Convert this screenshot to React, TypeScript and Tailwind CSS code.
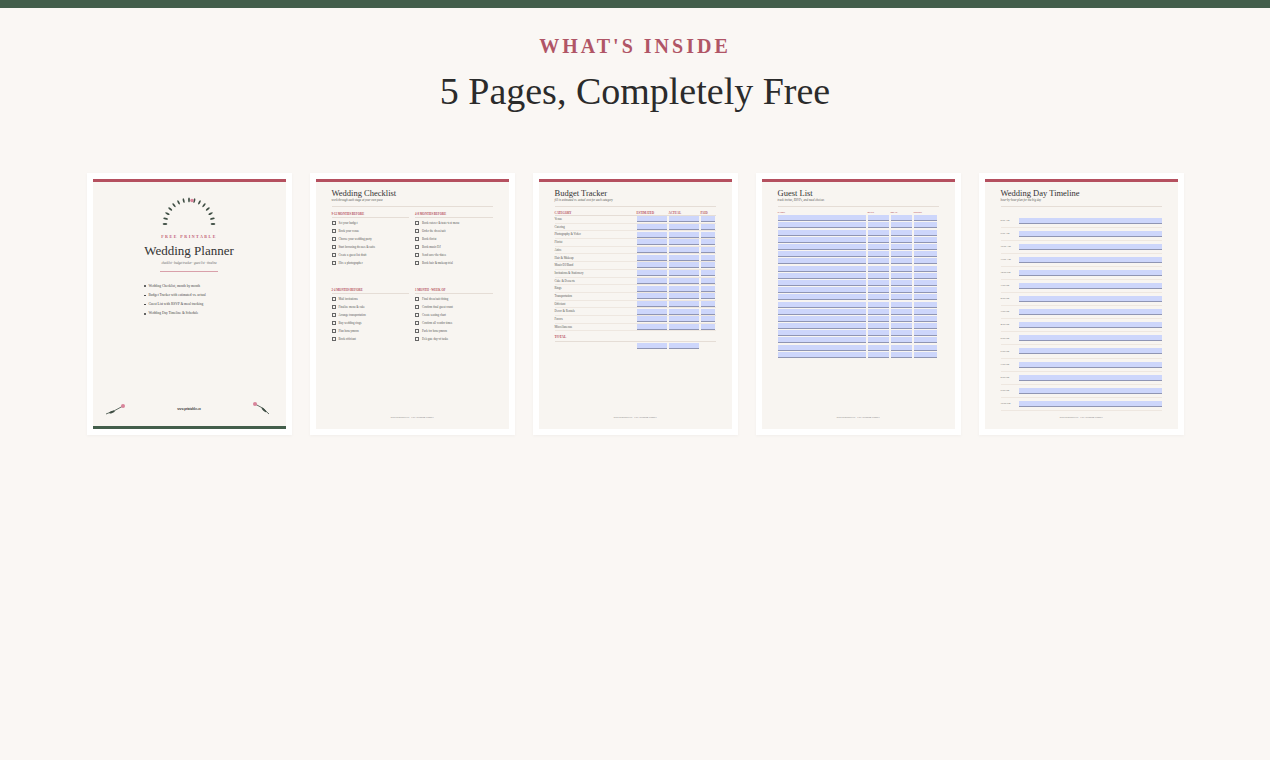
const serif = { fontFamily: '"Liberation Serif", "DejaVu Serif", serif' };

const Field = ({ className = "" }: { className?: string }) => (
  <div className={`h-[6px] border-b border-[#8f95b3] bg-[#cdd6fb] ${className}`} />
);

const Page = ({ children, bottom }: { children: React.ReactNode; bottom?: boolean }) => (
  <div className="bg-white p-[6px] shadow-[0_1px_3px_rgba(0,0,0,0.04)]">
    <div className="relative flex h-[250px] w-[193px] flex-col bg-[#f8f5f1]">
      <div className="h-[3px] bg-[#b5505f]" />
      {children}
      {bottom && <div className="mt-auto h-[3px] bg-[#435e4b]" />}
    </div>
  </div>
);

const Header = ({ title, sub }: { title: string; sub: string }) => (
  <div className="mx-4 mt-[6px] border-b border-[#e5ddd6] pb-[3px]">
    <div className="text-[8.5px] leading-[10px] text-[#333]" style={serif}>{title}</div>
    <div className="text-[3px] italic text-[#555]" style={serif}>{sub}</div>
  </div>
);

const Footer = () => (
  <div className="absolute bottom-[9px] left-0 right-0 text-center text-[2.5px] text-[#777]" style={serif}>
    www.printables.co · Free Wedding Planner
  </div>
);

const Cover = () => (
  <Page bottom>
    <div className="flex flex-col items-center" style={serif}>
      <svg width="56" height="34" viewBox="0 0 56 34" className="mt-[14px]">
        {Array.from({ length: 15 }).map((_, i) => {
          const a = Math.PI * (1 - i / 14);
          const x = 28 + 24 * Math.cos(a);
          const y = 28 - 24 * Math.sin(a);
          const deg = (-a * 180) / Math.PI + 90;
          return <ellipse key={i} cx={x} cy={y} rx="0.9" ry="2.4" fill="#3e4d43" transform={`rotate(${deg} ${x} ${y})`} />;
        })}
        <circle cx="31" cy="4.5" r="1.8" fill="#d9849a" />
      </svg>
      <div className="mt-[4px] text-[4px] font-bold tracking-[1.5px] text-[#c25a73]">FREE PRINTABLE</div>
      <div className="mt-[3px] text-[13px] leading-[16px] text-[#333]">Wedding Planner</div>
      <div className="mt-[2px] text-[3px] italic text-[#666]">checklist · budget tracker · guest list · timeline</div>
      <div className="mt-[5px] h-px w-[58px] bg-[#d9a0aa]" />
      <ul className="mt-[12px] flex w-[130px] flex-col gap-[4px] pl-[20px] text-[3.5px] text-[#444]">
        {["Wedding Checklist, month by month", "Budget Tracker with estimated vs. actual", "Guest List with RSVP & meal tracking", "Wedding Day Timeline & Schedule"].map((t) => (
          <li key={t} className="flex items-center gap-[3px]"><span className="h-[1.5px] w-[1.5px] rounded-full bg-[#333]" />{t}</li>
        ))}
      </ul>
    </div>
    <div className="absolute bottom-[14px] left-[12px] right-[12px] flex items-end justify-between">
      <svg width="22" height="12" viewBox="0 0 22 12"><path d="M1 11 Q10 8 18 3" stroke="#3e4d43" strokeWidth="0.8" fill="none" /><ellipse cx="7" cy="9" rx="3" ry="1" fill="#3e4d43" transform="rotate(-20 7 9)" /><circle cx="18" cy="3" r="2" fill="#d9849a" /></svg>
      <div className="mb-[4px] text-[3px] font-bold text-[#333]" style={serif}>www.printables.co</div>
      <svg width="22" height="14" viewBox="0 0 22 14"><path d="M4 3 Q12 6 18 13" stroke="#3e4d43" strokeWidth="0.8" fill="none" /><ellipse cx="13" cy="9" rx="3" ry="1" fill="#3e4d43" transform="rotate(40 13 9)" /><circle cx="4" cy="3" r="2" fill="#d9849a" /></svg>
    </div>
  </Page>
);

const Section = ({ title, items }: { title: string; items: string[] }) => (
  <div className="flex flex-col" style={serif}>
    <div className="border-b border-[#e5ddd6] pb-[1px] text-[3px] font-bold text-[#b5505f]">{title}</div>
    <div className="mt-[3px] flex flex-col gap-[3.5px]">
      {items.map((t) => (
        <div key={t} className="flex items-center gap-[3px] text-[3px] text-[#555]">
          <span className="h-[4px] w-[4px] border-[0.5px] border-[#666]" />{t}
        </div>
      ))}
    </div>
  </div>
);

const Checklist = () => (
  <Page>
    <Header title="Wedding Checklist" sub="work through each stage at your own pace" />
    <div className="mx-4 mt-[5px] grid grid-cols-2 gap-x-[6px] gap-y-[22px]">
      <Section title="9-12 MONTHS BEFORE" items={["Set your budget", "Book your venue", "Choose your wedding party", "Start browsing dresses & suits", "Create a guest list draft", "Hire a photographer"]} />
      <Section title="4-8 MONTHS BEFORE" items={["Book caterer & taste-test menu", "Order the dress/suit", "Book florist", "Book music/DJ", "Send save-the-dates", "Book hair & makeup trial"]} />
      <Section title="2-4 MONTHS BEFORE" items={["Mail invitations", "Finalize menu & cake", "Arrange transportation", "Buy wedding rings", "Plan honeymoon", "Book officiant"]} />
      <Section title="1 MONTH - WEEK OF" items={["Final dress/suit fitting", "Confirm final guest count", "Create seating chart", "Confirm all vendor times", "Pack for honeymoon", "Delegate day-of tasks"]} />
    </div>
    <Footer />
  </Page>
);

const Budget = () => {
  const cats = ["Venue", "Catering", "Photography & Video", "Florist", "Attire", "Hair & Makeup", "Music/DJ/Band", "Invitations & Stationery", "Cake & Desserts", "Rings", "Transportation", "Officiant", "Decor & Rentals", "Favors", "Miscellaneous"];
  return (
    <Page>
      <Header title="Budget Tracker" sub="fill in estimated vs. actual cost for each category" />
      <div className="mx-4 mt-[4px] text-[3px] text-[#555]" style={serif}>
        <div className="grid grid-cols-[80px_30px_30px_14px] gap-x-[2px] border-b border-[#e5ddd6] font-bold text-[#b5505f]">
          <span>CATEGORY</span><span>ESTIMATED</span><span>ACTUAL</span><span>PAID</span>
        </div>
        {cats.map((c) => (
          <div key={c} className="grid h-[7.7px] grid-cols-[80px_30px_30px_14px] items-center gap-x-[2px] border-b border-[#eee7e0]">
            <span>{c}</span><Field /><Field /><Field />
          </div>
        ))}
        <div className="mt-[4px] border-b border-[#e5ddd6] text-[3.5px] font-bold text-[#b5505f]">TOTAL</div>
        <div className="mt-[1px] grid grid-cols-[80px_30px_30px_14px] gap-x-[2px]"><span /><Field /><Field /></div>
      </div>
      <Footer />
    </Page>
  );
};

const Guests = () => (
  <Page>
    <Header title="Guest List" sub="track invites, RSVPs, and meal choices" />
    <div className="mx-4 mt-[4px] text-[2.5px]" style={serif}>
      <div className="grid grid-cols-[88px_21px_21px_23px] gap-x-[2px] font-bold text-[#b5505f]">
        <span>NAME</span><span>RSVP</span><span>MEAL</span><span>NOTES</span>
      </div>
      <div className="mt-[1px] flex flex-col gap-[1.2px]">
        {Array.from({ length: 20 }).map((_, i) => (
          <div key={i} className="grid grid-cols-[88px_21px_21px_23px] gap-x-[2px]">
            <Field /><Field /><Field /><Field />
          </div>
        ))}
      </div>
    </div>
    <Footer />
  </Page>
);

const Timeline = () => {
  const times = ["8:00 AM", "9:00 AM", "10:00 AM", "11:00 AM", "12:00 PM", "1:00 PM", "2:00 PM", "3:00 PM", "4:00 PM", "5:00 PM", "6:00 PM", "7:00 PM", "8:00 PM", "9:00 PM", "10:00 PM"];
  return (
    <Page>
      <Header title="Wedding Day Timeline" sub="hour-by-hour plan for the big day" />
      <div className="mx-4 mt-[8px] flex flex-col" style={serif}>
        {times.map((t) => (
          <div key={t} className="flex h-[13.1px] items-center border-b border-[#eee7e0]">
            <span className="w-[18px] text-[2.5px] text-[#555]">{t}</span>
            <Field className="flex-1" />
          </div>
        ))}
      </div>
      <Footer />
    </Page>
  );
};

export default function App() {
  return (
    <div className="min-h-[760px] bg-[#faf7f4]">
      <div className="h-[8px] bg-[#435e4b]" />
      <div className="flex flex-col items-center pt-[23px]" style={serif}>
        <div className="text-[20px] font-bold tracking-[3px] text-[#b05566]">WHAT'S INSIDE</div>
        <div className="mt-[6px] text-[38px] leading-[48px] text-[#2b2b2b]">5 Pages, Completely Free</div>
      </div>
      <div className="mt-[58px] flex justify-center gap-[18px]">
        <Cover />
        <Checklist />
        <Budget />
        <Guests />
        <Timeline />
      </div>
    </div>
  );
}
